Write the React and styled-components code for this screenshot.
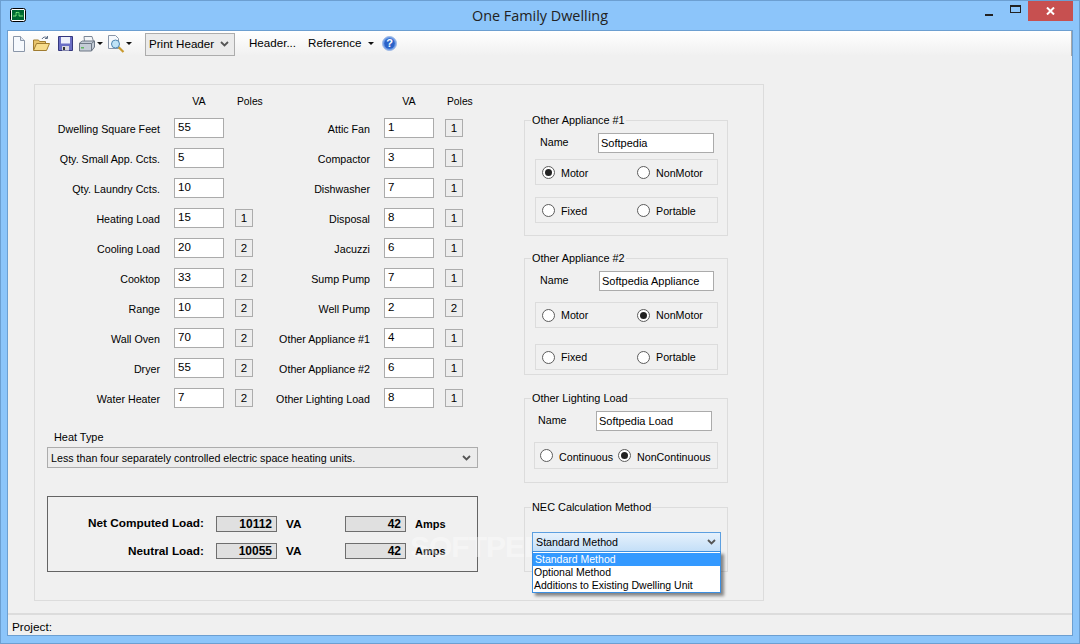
import React from "react";
import styled, { createGlobalStyle } from "styled-components";

const GlobalStyle = createGlobalStyle`
  html, body {
    margin: 0;
    padding: 0;
    background: #8cc5fa;
  }
  * {
    box-sizing: border-box;
  }
`;

const leftRows = [
  { label: "Dwelling Square Feet", va: "55" },
  { label: "Qty. Small App. Ccts.", va: "5" },
  { label: "Qty. Laundry Ccts.", va: "10" },
  { label: "Heating Load", va: "15", poles: "1" },
  { label: "Cooling Load", va: "20", poles: "2" },
  { label: "Cooktop", va: "33", poles: "2" },
  { label: "Range", va: "10", poles: "2" },
  { label: "Wall Oven", va: "70", poles: "2" },
  { label: "Dryer", va: "55", poles: "2" },
  { label: "Water Heater", va: "7", poles: "2" },
];

const rightRows = [
  { label: "Attic Fan", va: "1", poles: "1" },
  { label: "Compactor", va: "3", poles: "1" },
  { label: "Dishwasher", va: "7", poles: "1" },
  { label: "Disposal", va: "8", poles: "1" },
  { label: "Jacuzzi", va: "6", poles: "1" },
  { label: "Sump Pump", va: "7", poles: "1" },
  { label: "Well Pump", va: "2", poles: "2" },
  { label: "Other Appliance #1", va: "4", poles: "1" },
  { label: "Other Appliance #2", va: "6", poles: "1" },
  { label: "Other Lighting Load", va: "8", poles: "1" },
];

function Chevron() {
  return (
    <svg width="9" height="6" viewBox="0 0 9 6">
      <path d="M1 1l3.5 3.5L8 1" fill="none" stroke="#555" strokeWidth="1.8" />
    </svg>
  );
}

function AppIcon() {
  return (
    <svg width="16" height="14" viewBox="0 0 16 14">
      <rect x="0.5" y="0.5" width="15" height="13" rx="2" fill="#fff" stroke="#000" />
      <rect x="2" y="2" width="12" height="10" fill="#063" />
      <path d="M3 8h3V4.5h3V8h4" fill="none" stroke="#7fe87f" />
      <path d="M2 6h12M8 2v10" stroke="#0a8a3a" strokeWidth="0.6" />
    </svg>
  );
}

function NewIcon() {
  return (
    <svg width="12" height="16" viewBox="0 0 12 16">
      <path d="M.5.5h7l4 4v11H.5z" fill="#f6f9fd" stroke="#8a96a8" />
      <path d="M7.5.5v4h4" fill="#dde5ef" stroke="#8a96a8" />
    </svg>
  );
}

function OpenIcon() {
  return (
    <svg width="17" height="16" viewBox="0 0 17 16">
      <path d="M.5 14V4h5l1 1.5h6V8" fill="#e8c46c" stroke="#a07c30" />
      <path d="M.5 14.5L3.5 7.5h13l-3 7z" fill="#f7dc8c" stroke="#a07c30" />
      <path d="M9 3c1-2 3-2.500 5-1.500M14.500 0v2.500H12" fill="none" stroke="#5f6f88" />
    </svg>
  );
}

function SaveIcon() {
  return (
    <svg width="15" height="15" viewBox="0 0 15 15">
      <path d="M.5.500h14v14H.5z" fill="#6a6ec4" stroke="#35387e" />
      <rect x="3" y="1" width="9" height="6.500" fill="#eef0fa" />
      <rect x="4" y="10" width="7" height="4.500" fill="#d8d8e0" />
      <rect x="5" y="11" width="2" height="3" fill="#333" />
    </svg>
  );
}

function PrintIcon() {
  return (
    <svg width="16" height="16" viewBox="0 0 16 16">
      <path d="M5 .5h8l1.500 5h-9z" fill="#f4f6f8" stroke="#7c8796" />
      <path d="M.5 7l3-2h12v6l-3 4H.5z" fill="#c4ccd6" stroke="#6e7886" />
      <path d="M.5 7.500h12V15M12.500 7.500l3-2.500" fill="none" stroke="#6e7886" />
      <rect x="2" y="11" width="3" height="1.500" fill="#5fb55f" />
    </svg>
  );
}

function PreviewIcon() {
  return (
    <svg width="17" height="18" viewBox="0 0 17 18">
      <path d="M.5.500h7l3 3v10H.5z" fill="#f6f9fd" stroke="#8a96a8" />
      <path d="M10.500 12l5 5" stroke="#c99a2e" strokeWidth="2.200" />
      <circle cx="7.500" cy="9" r="4" fill="#bfe3f7" stroke="#4f86b0" />
    </svg>
  );
}

function HelpIcon() {
  return (
    <svg width="15" height="15" viewBox="0 0 15 15">
      <circle cx="7.500" cy="7.500" r="7" fill="#6d9be6" stroke="#9db9e6" />
      <circle cx="7.500" cy="7.500" r="5.300" fill="#2a62c8" />
      <text x="7.500" y="11.300" textAnchor="middle" fontFamily="Liberation Sans" fontWeight="700" fontSize="11" fill="#fff">?</text>
    </svg>
  );
}

function Radio({ label, checked, raised }) {
  return (
    <RadioItem>
      <RadioDot $checked={checked} />
      <RadioText $raised={raised}>{label}</RadioText>
    </RadioItem>
  );
}

function LoadRow({ label, va, poles }) {
  return (
    <>
      <RowLabel>{label}</RowLabel>
      <InputCell>{va}</InputCell>
      <PoleCell>{poles && <PoleButton>{poles}</PoleButton>}</PoleCell>
    </>
  );
}

function App() {
  return (
    <Page>
      <GlobalStyle />
      <TitleBar>
        <AppBadge>
          <AppIcon />
        </AppBadge>
        <Title>One Family Dwelling</Title>
        <WindowControls>
          <ControlButton>
            <MinGlyph />
          </ControlButton>
          <ControlButton>
            <MaxGlyph />
          </ControlButton>
          <CloseButton>
            <svg width="9" height="8" viewBox="0 0 9 8">
              <path d="M1 .5l7 7M8 .5l-7 7" stroke="#fff" strokeWidth="2" />
            </svg>
          </CloseButton>
        </WindowControls>
      </TitleBar>

      <Client>
        <Toolbar>
          <ToolIcon $left={5}><NewIcon /></ToolIcon>
          <ToolIcon $left={8}><OpenIcon /></ToolIcon>
          <ToolIcon $left={8}><SaveIcon /></ToolIcon>
          <ToolIcon $left={6}><PrintIcon /></ToolIcon>
          <DropArrow $left={2} />
          <ToolIcon $left={5}><PreviewIcon /></ToolIcon>
          <DropArrow $left={1} />
          <HeaderCombo>
            <ComboText>Print Header</ComboText>
            <Chevron />
          </HeaderCombo>
          <ToolText $left={14}>Header...</ToolText>
          <ToolText $left={12}>Reference</ToolText>
          <DropArrow $left={6} />
          <ToolIcon $left={8}><HelpIcon /></ToolIcon>
        </Toolbar>

        <Main>
          <Panel>
            <LeftColumn>
              <LoadGrid>
                <span />
                <HeadVa>VA</HeadVa>
                <HeadPoles>Poles</HeadPoles>
                <span />
                <HeadVa>VA</HeadVa>
                <HeadPoles>Poles</HeadPoles>
                {leftRows.map((row, i) => (
                  <React.Fragment key={row.label}>
                    <LoadRow {...row} />
                    <LoadRow {...rightRows[i]} />
                  </React.Fragment>
                ))}
              </LoadGrid>

              <HeatLabel>Heat Type</HeatLabel>
              <HeatSelect>
                Less than four separately controlled electric space heating units.
                <Chevron />
              </HeatSelect>

              <ResultBox>
                <ResultLabel>Net Computed Load:</ResultLabel>
                <ResultValue>10112</ResultValue>
                <ResultUnit>VA</ResultUnit>
                <ResultValue>42</ResultValue>
                <ResultUnit $amps>Amps</ResultUnit>
                <ResultLabel $lower>Neutral Load:</ResultLabel>
                <ResultValue>10055</ResultValue>
                <ResultUnit>VA</ResultUnit>
                <ResultValue>42</ResultValue>
                <ResultUnit $amps>Amps</ResultUnit>
              </ResultBox>
            </LeftColumn>

            <RightColumn>
              <Group $top={35} $height={116}>
                <GroupTitle>Other Appliance #1</GroupTitle>
                <NameRow $left={15}>
                  <NameLabel>Name</NameLabel>
                  <NameInput $width={116}>Softpedia</NameInput>
                </NameRow>
                <RadioBox $top={6} $col={95}>
                  <Radio label="Motor" checked />
                  <Radio label="NonMotor" />
                </RadioBox>
                <RadioBox $top={12} $col={95}>
                  <Radio label="Fixed" />
                  <Radio label="Portable" />
                </RadioBox>
              </Group>

              <Group $top={22} $height={117}>
                <GroupTitle>Other Appliance #2</GroupTitle>
                <NameRow $left={15}>
                  <NameLabel>Name</NameLabel>
                  <NameInput $width={115} $nudge={1}>Softpedia Appliance</NameInput>
                </NameRow>
                <RadioBox $top={11} $col={95}>
                  <Radio label="Motor" raised />
                  <Radio label="NonMotor" checked raised />
                </RadioBox>
                <RadioBox $top={16} $col={95}>
                  <Radio label="Fixed" raised />
                  <Radio label="Portable" raised />
                </RadioBox>
              </Group>

              <Group $top={23} $height={85}>
                <GroupTitle>Other Lighting Load</GroupTitle>
                <NameRow $left={13}>
                  <NameLabel>Name</NameLabel>
                  <NameInput $width={116}>Softpedia Load</NameInput>
                </NameRow>
                <RadioBox $top={11} $col={78} $left={9} $width={184} $height={27} $pad={5}>
                  <Radio label="Continuous" />
                  <Radio label="NonContinuous" checked />
                </RadioBox>
              </Group>

              <Group $top={24} $height={65}>
                <GroupTitle>NEC Calculation Method</GroupTitle>
                <MethodCombo>
                  Standard Method
                  <Chevron />
                </MethodCombo>
                <MethodList>
                  <MethodItem $selected>Standard Method</MethodItem>
                  <MethodItem>Optional Method</MethodItem>
                  <MethodItem>Additions to Existing Dwelling Unit</MethodItem>
                </MethodList>
              </Group>
            </RightColumn>
            <Watermark>SOFTPEDIA</Watermark>
          </Panel>
        </Main>

        <StatusBar>Project:</StatusBar>
      </Client>
    </Page>
  );
}

export default App;

const uiFont = `"Liberation Sans", Arial, sans-serif`;

const Page = styled.div`
  position: relative;
  width: 1080px;
  height: 644px;
  overflow: hidden;
  display: flex;
  flex-direction: column;
  padding: 0 6px 7px 6px;
  background: #8cc5fa;
  border: 1px solid #6c9fd1;
  font-family: ${uiFont};
  font-size: 10.7px;
  color: #000;
`;

const TitleBar = styled.div`
  height: 29px;
  flex: none;
  display: grid;
  grid-template-columns: 1fr auto 1fr;
  align-items: start;
`;

const AppBadge = styled.div`
  padding: 7px 0 0 3px;
  line-height: 0;
`;

const Title = styled.div`
  padding-top: 6px;
  font-family: "Open Sans", sans-serif;
  font-size: 14.4px;
  line-height: 18px;
  color: #222;
`;

const WindowControls = styled.div`
  display: flex;
  justify-content: flex-end;
`;

const ControlButton = styled.div`
  width: 26px;
  height: 20px;
  display: flex;
  align-items: center;
  justify-content: center;
`;

const MinGlyph = styled.div`
  width: 8px;
  height: 2px;
  margin-top: 7px;
  background: #222;
`;

const MaxGlyph = styled.div`
  width: 11px;
  height: 8px;
  margin-bottom: 5px;
  border: 1px solid #222;
  border-top-width: 2px;
`;

const CloseButton = styled.div`
  width: 45px;
  height: 20px;
  display: flex;
  align-items: center;
  justify-content: center;
  background: #c75050;
`;

const Client = styled.div`
  flex: 1;
  display: flex;
  flex-direction: column;
  min-height: 0;
  background: #f0f0f0;
  border: 1px solid #6c9fd1;
`;

const Toolbar = styled.div`
  height: 25px;
  flex: none;
  display: flex;
  align-items: center;
  background: linear-gradient(to bottom, #fff, #f0f0f0);
  box-shadow: inset -1px 0 0 #a8a8a8;
  font-size: 11.6px;
`;

const ToolIcon = styled.div`
  margin-left: ${(props) => props.$left}px;
  display: flex;
  align-items: center;
`;

const DropArrow = styled.div`
  margin-left: ${(props) => props.$left}px;
  width: 0;
  height: 0;
  border-left: 3px solid transparent;
  border-right: 3px solid transparent;
  border-top: 3px solid #111;
`;

const HeaderCombo = styled.div`
  width: 90px;
  height: 23px;
  margin-left: 13px;
  margin-top: 1px;
  padding: 0 5px 0 3px;
  display: flex;
  align-items: center;
  justify-content: space-between;
  background: #ebebeb;
  border: 1px solid #acacac;
`;

const ComboText = styled.span`
  margin-top: -2px;
`;

const ToolText = styled.div`
  margin: -2px 0 0 ${(props) => props.$left}px;
`;

const Main = styled.div`
  flex: 1;
  min-height: 0;
  padding: 28px 0 0 26px;
`;

const Panel = styled.div`
  position: relative;
  width: 730px;
  height: 517px;
  display: flex;
  border: 1px solid #dcdcdc;
`;

const LeftColumn = styled.div`
  width: 443px;
  flex: none;
  padding-top: 4px;
`;

const LoadGrid = styled.div`
  display: grid;
  grid-template-columns: 139px 50px 29px 131px 50px 29px;
  grid-template-rows: 24px repeat(10, 30px);
  align-items: center;
`;

const HeadVa = styled.div`
  text-align: center;
`;

const HeadPoles = styled.div`
  padding-left: 13px;
  font-size: 10.3px;
`;

const RowLabel = styled.div`
  margin-top: 2px;
  padding-right: 14px;
  text-align: right;
  white-space: nowrap;
`;

const InputCell = styled.div`
  height: 20px;
  padding-left: 3px;
  line-height: 16px;
  font-size: 11.5px;
  background: #fff;
  border: 1px solid #ababab;
`;

const PoleCell = styled.div`
  padding-left: 11px;
`;

const PoleButton = styled.div`
  width: 18px;
  height: 18px;
  text-align: center;
  line-height: 16px;
  font-size: 11.5px;
  background: #ededed;
  border: 1px solid #acacac;
`;

const HeatLabel = styled.div`
  margin: 17px 0 3px 19px;
  line-height: 14px;
  font-size: 10.9px;
`;

const HeatSelect = styled.div`
  width: 431px;
  height: 21px;
  margin-left: 12px;
  padding: 0 6px 0 3px;
  display: flex;
  align-items: center;
  justify-content: space-between;
  background: #ececec;
  border: 1px solid #acacac;
`;

const ResultBox = styled.div`
  width: 431px;
  height: 76px;
  margin: 28px 0 0 12px;
  padding-top: 19px;
  display: grid;
  grid-template-columns: 168px 61px 68px 61px auto;
  grid-auto-rows: 16px;
  row-gap: 11px;
  align-items: center;
  border: 1px solid #646464;
  font-size: 11.8px;
  font-weight: 700;
`;

const ResultLabel = styled.div`
  margin-top: ${(props) => (props.$lower ? 0 : -2)}px;
  padding-right: 12px;
  text-align: right;
  white-space: nowrap;
`;

const ResultValue = styled.div`
  height: 16px;
  padding-right: 4px;
  text-align: right;
  line-height: 15px;
  font-size: 12px;
  background: #e0e0e0;
  border: 1px solid #6e6e6e;
`;

const ResultUnit = styled.div`
  padding-left: 9px;
  font-size: ${(props) => (props.$amps ? "11px" : "inherit")};
`;

const RightColumn = styled.div`
  margin-left: 46px;
  width: 204px;
  flex: none;
`;

const Group = styled.div`
  position: relative;
  height: ${(props) => props.$height}px;
  margin-top: ${(props) => props.$top}px;
  padding-top: 12px;
  border: 1px solid #dcdcdc;
`;

const GroupTitle = styled.div`
  position: absolute;
  top: -8px;
  left: 6px;
  padding: 0 1px;
  line-height: 14px;
  white-space: nowrap;
  font-size: 10.9px;
  background: #f0f0f0;
`;

const NameRow = styled.div`
  display: flex;
  align-items: center;
  height: 20px;
  padding-left: ${(props) => props.$left}px;
`;

const NameLabel = styled.div`
  width: 58px;
  margin-top: -2px;
`;

const NameInput = styled.div`
  width: ${(props) => props.$width}px;
  height: 20px;
  margin-left: ${(props) => props.$nudge || 0}px;
  padding-left: 2px;
  line-height: 18px;
  white-space: nowrap;
  font-size: 11px;
  background: #fff;
  border: 1px solid #ababab;
`;

const RadioBox = styled.div`
  width: ${(props) => props.$width || 183}px;
  height: ${(props) => props.$height || 26}px;
  margin: ${(props) => props.$top}px 0 0 ${(props) => props.$left || 10}px;
  padding-left: ${(props) => props.$pad || 6}px;
  display: grid;
  grid-template-columns: ${(props) => props.$col}px auto;
  align-items: center;
  border: 1px solid #dcdcdc;
`;

const RadioItem = styled.div`
  display: flex;
  align-items: center;
  gap: 6px;
  white-space: nowrap;
`;

const RadioText = styled.span`
  margin-top: ${(props) => (props.$raised ? 0 : 2)}px;
`;

const RadioDot = styled.div`
  width: 13px;
  height: 13px;
  flex: none;
  display: flex;
  align-items: center;
  justify-content: center;
  background: #fff;
  border: 1px solid #5c5c5c;
  border-radius: 50%;

  &::after {
    content: "";
    display: ${(props) => (props.$checked ? "block" : "none")};
    width: 7px;
    height: 7px;
    background: #222;
    border-radius: 50%;
  }
`;

const MethodCombo = styled.div`
  position: relative;
  z-index: 1;
  width: 189px;
  height: 20px;
  margin: 12px 0 0 7px;
  padding: 0 4px 0 3px;
  display: flex;
  align-items: center;
  justify-content: space-between;
  background: linear-gradient(to bottom, #e6f1fc, #c4dff8);
  border: 1px solid #5c9fe0;
`;

const MethodList = styled.div`
  position: absolute;
  z-index: 2;
  top: 43px;
  left: 7px;
  width: 189px;
  height: 42px;
  padding-top: 1px;
  font-size: 10.5px;
  background: #fff;
  border: 1px solid #3b8ee0;
  box-shadow: 3px 3px 3px rgba(0, 0, 0, 0.45);
`;

const MethodItem = styled.div`
  height: 13px;
  padding-left: ${(props) => (props.$selected ? 2 : 1)}px;
  line-height: 13px;
  white-space: nowrap;
  color: ${(props) => (props.$selected ? "#fff" : "#000")};
  background: ${(props) => (props.$selected ? "#3399ff" : "transparent")};
`;

const Watermark = styled.div`
  position: absolute;
  left: 375px;
  top: 445px;
  font-size: 30px;
  font-weight: 700;
  letter-spacing: -1px;
  color: rgba(255, 255, 255, 0.4);
  pointer-events: none;
`;

const StatusBar = styled.div`
  height: 22px;
  flex: none;
  margin-top: 13px;
  padding: 5px 0 0 4px;
  border-top: 2px solid #dcdcdc;
  line-height: 14px;
  font-size: 11.8px;
`;
